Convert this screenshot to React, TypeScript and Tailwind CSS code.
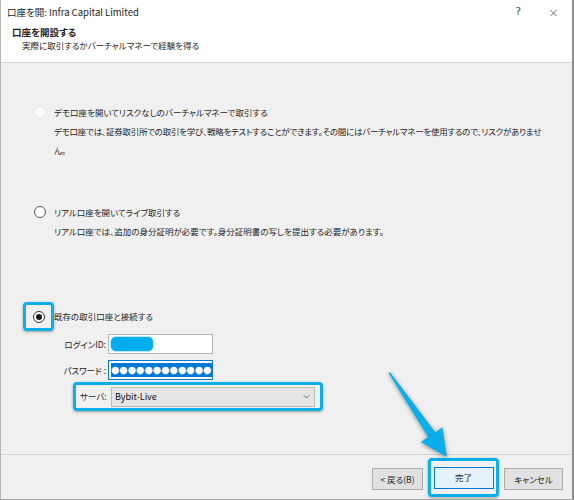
import React from 'react';

const jp = "font-['Noto_Sans_CJK_JP','Noto_Sans',sans-serif] [font-feature-settings:'palt']";

const Radio = ({ checked = false, faint = false }: { checked?: boolean; faint?: boolean }) => (
  <div
    className={`w-[12px] h-[12px] rounded-full bg-white flex items-center justify-center shrink-0 border ${
      faint ? 'border-[#e6e6e6]' : checked ? 'border-[#333333]' : 'border-[#555555]'
    }`}
  >
    {checked && <div className="w-[6px] h-[6px] rounded-full bg-[#1a1a1a]" />}
  </div>
);

export default function App() {
  return (
    <div className={`relative w-[574px] h-[500px] flex flex-col bg-white border-l border-l-[#b5b5b5] border-r-2 border-r-[#8c8c8c] border-b border-b-[#a8a8a8] text-[#1e1e1e] ${jp}`}>
      {/* title bar */}
      <div className="h-[25px] flex items-center pl-[6px] pr-[13px] bg-white">
        <span className="text-[9.5px] text-[#222]">口座を開: Infra Capital Limited</span>
        <div className="ml-auto flex items-center">
          <span className="text-[11px] text-[#555] font-['DejaVu_Sans',sans-serif]">?</span>
          <span className="ml-[27px] text-[13px] text-[#555] font-['DejaVu_Sans',sans-serif] font-light">×</span>
        </div>
      </div>

      {/* header */}
      <div className="h-[38px] bg-white border-b border-b-[#d5d5d5] pl-[11px] pt-[1px]">
        <div className="text-[9.5px] font-bold leading-[13px]">口座を開設する</div>
        <div className="pl-[10px] text-[8.5px] leading-[12px] text-[#222]">実際に取引するかバーチャルマネーで経験を得る</div>
      </div>

      {/* body */}
      <div className="flex-1 bg-[#f0f0f0] flex flex-col text-[8.5px]">
        <div className="mt-[42px] h-[14px] flex items-center pl-[33px] gap-[8px]">
          <Radio faint />
          <span>デモ口座を開いてリスクなしのバーチャルマネーで取引する</span>
        </div>
        <div className="mt-[3px] pl-[53px] pr-[20px] leading-[19px] whitespace-nowrap tracking-[-0.25px]">
          デモ口座では、証券取引所での取引を学び、戦略をテストすることができます。その間にはバーチャルマネーを使用するので、リスクがありませ
          <br />
          ん。
        </div>

        <div className="mt-[45px] h-[14px] flex items-center pl-[33px] gap-[8px]">
          <Radio />
          <span>リアル口座を開いてライブ取引する</span>
        </div>
        <div className="mt-[3px] pl-[53px] leading-[19px]">
          リアル口座では、追加の身分証明が必要です。身分証明書の写しを提出する必要があります。
        </div>

        <div className="mt-[61px] flex items-center">
          <div className="ml-[22px] w-[31px] h-[29px] rounded-[4px] border-[3px] border-[#0aaee9] shadow-[0_1px_3px_rgba(0,0,0,0.35)] flex items-center justify-center">
            <Radio checked />
          </div>
          <span>既存の取引口座と接続する</span>
        </div>

        <div className="mt-[3px] flex items-center">
          <span className="w-[106px] text-right pr-[1px]">ログインID:</span>
          <div className="ml-[1px] w-[105px] h-[20px] bg-white border border-[#b4b4b4] p-[2px]">
            <div className="w-[42px] h-[14px] rounded-[5px] bg-[#00aeef] shadow-[0_0_2px_#00aeef]" />
          </div>
        </div>

        <div className="mt-[6px] flex items-center">
          <span className="w-[106px] text-right pr-[1px]">パスワード :</span>
          <div className="ml-[1px] w-[105px] h-[20px] bg-white border border-[#0078d7] pl-[2px] py-[2px] overflow-hidden">
            <div className="h-full bg-[#0078d7] text-white text-[9.6px] leading-[14px] whitespace-nowrap overflow-hidden font-['DejaVu_Sans',sans-serif]">
              ●●●●●●●●●●●●●
            </div>
          </div>
        </div>

        <div className="mt-[2px] ml-[72px] w-[250px] h-[29px] rounded-[4px] border-[3px] border-[#0aaee9] shadow-[0_1px_3px_rgba(0,0,0,0.35)] flex items-center pl-[4px]">
          <span className="w-[31px]">サーバ:</span>
          <div className="w-[204px] h-[20px] bg-[#e5e5e5] border border-[#b9b9b9] flex items-center pl-[3px] pr-[4px]">
            <span className="text-[9px] text-[#111]">Bybit-Live</span>
            <svg className="ml-auto" width="7" height="5" viewBox="0 0 7 5">
              <path d="M0.5 1 L3.5 4 L6.5 1" fill="none" stroke="#666" strokeWidth="0.9" />
            </svg>
          </div>
        </div>
      </div>

      {/* footer */}
      <div className="h-[45px] bg-[#f0f0f0] border-t border-t-[#d4d4d4] flex items-start justify-end pr-[9px] pt-[3px] text-[8.5px]">
        <button className="mt-[10px] w-[51px] h-[22px] bg-[#e1e1e1] border border-[#adadad] text-[#222]">&lt; 戻る(B)</button>
        <div className="ml-[5px] w-[71px] h-[39px] rounded-[4px] border-[3px] border-[#0aaee9] shadow-[0_1px_3px_rgba(0,0,0,0.35)] flex items-center justify-center">
          <button className="w-[60px] h-[22px] bg-[#e5f1fb] border border-[#0078d7] text-[#222]">完了</button>
        </div>
        <button className="mt-[10px] ml-[5px] w-[59px] h-[22px] bg-[#e1e1e1] border border-[#adadad] text-[#222]">キャンセル</button>
      </div>

      {/* annotation arrow */}
      <svg className="absolute left-0 top-0 pointer-events-none drop-shadow-[0_1px_2px_rgba(0,0,0,0.45)]" width="574" height="500" viewBox="0 0 574 500">
        <polygon
          points="387.5,373 389,372.2 434.5,432.4 441.3,427.3 446,457 419.9,442.1 427.3,437"
          fill="#0aaee9"
        />
      </svg>
    </div>
  );
}
